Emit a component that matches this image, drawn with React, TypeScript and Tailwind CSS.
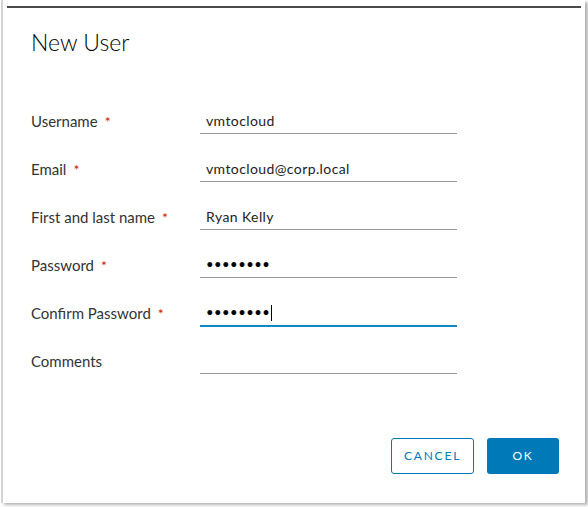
import React from 'react';

const fields = [
  { label: 'Username', value: 'vmtocloud', type: 'text' },
  { label: 'Email', value: 'vmtocloud@corp.local', type: 'text' },
  { label: 'First and last name', value: 'Ryan Kelly', type: 'text' },
  { label: 'Password', value: '••••••••', type: 'password' },
  { label: 'Confirm Password', value: '••••••••', type: 'password', focused: true },
  { label: 'Comments', value: '', type: 'text', optional: true },
];

export default function App() {
  return (
    <div className="w-[588px] h-[507px] bg-white font-['Lato',sans-serif] text-[#313131]">
      <div className="ml-px w-[584px] h-[503px] border-l-2 border-[#d4d4d4] bg-white shadow-[3px_2px_3px_rgba(0,0,0,0.3)] flex flex-col">
        {/* top rule */}
        <div className="ml-[4px] mr-[4px] mt-[6px] h-[2px] bg-[#4a4a4a]" />

        <h2 className="pl-[28px] mt-[20px] text-[23px] leading-[28px] font-light text-[#000]">New User</h2>

        {/* Form */}
        <div className="pl-[28px] mt-[41px] flex flex-col">
          {fields.map((f) => (
            <div key={f.label} className="flex items-center h-12">
              <label className="w-[169px] text-[15px] text-[#333]">
                {f.label}
                {!f.optional && <span className="ml-[7px] text-[#c92100] text-[14px]">*</span>}
              </label>
              <div
                className={`w-[257px] h-[26px] flex items-center pl-[6px] ${
                  f.focused ? 'border-b-2 border-[#0f8ac8] mt-[2px]' : 'border-b border-[#9a9a9a]'
                }`}
              >
                {f.type === 'password' ? (
                  <span className="text-[13px] tracking-[0.5px] text-black flex items-center">
                    {f.value}
                    {f.focused && <span className="ml-[1px] w-px h-[16px] bg-black inline-block" />}
                  </span>
                ) : (
                  <span className="text-[14px] tracking-[0.4px] text-[#222]">{f.value}</span>
                )}
              </div>
            </div>
          ))}
        </div>

        {/* Footer */}
        <div className="mt-auto mb-[29px] mr-[26px] flex justify-end gap-[13px]">
          <button className="w-[83px] h-[36px] rounded-[3px] border border-[#0079b8] text-[#0079b8] text-[12px] tracking-[1.8px]">
            CANCEL
          </button>
          <button className="w-[72px] h-[36px] rounded-[3px] bg-[#0079b8] text-white text-[12px] tracking-[1.8px]">
            OK
          </button>
        </div>
      </div>
    </div>
  );
}
